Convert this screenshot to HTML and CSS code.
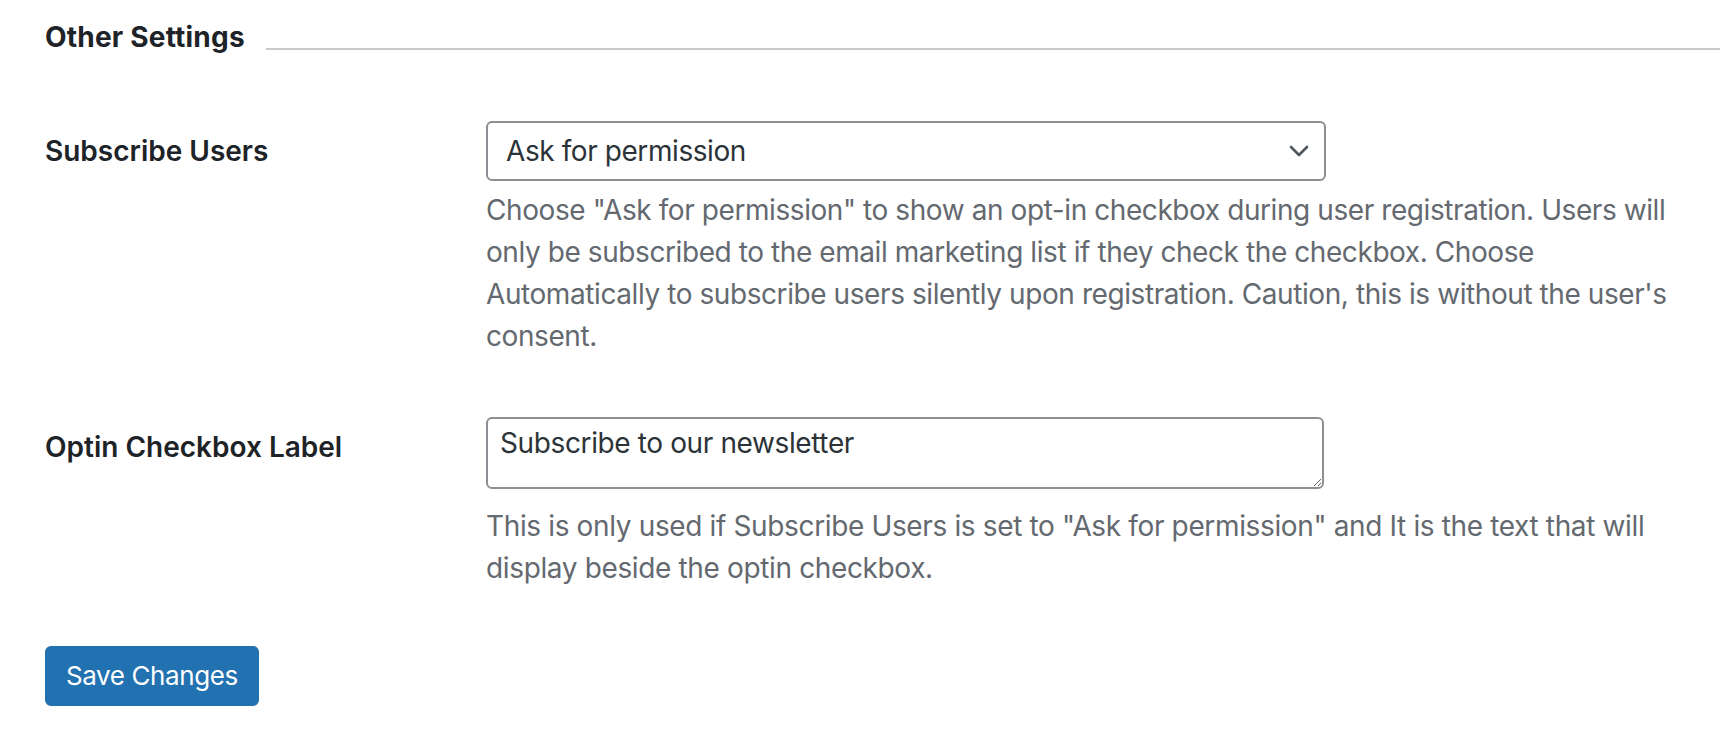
FILE: index.html
```html
<!DOCTYPE html>
<html lang="en">
<head>
<meta charset="utf-8">
<title>Other Settings</title>
<link rel="stylesheet" href="styles.css">
</head>
<body>
<div class="page">
  <div class="section-head">
    <h2 class="section-title">Other Settings</h2>
    <div class="section-rule"></div>
  </div>

  <form class="settings">
    <div class="row">
      <label class="row-label" for="subscribe-users">Subscribe Users</label>
      <div class="row-field">
        <div class="select-wrap">
          <select id="subscribe-users" class="select">
            <option>Ask for permission</option>
            <option>Automatically</option>
          </select>
          <svg class="chevron" width="20" height="12" viewBox="0 0 20 12" aria-hidden="true"><path d="M2 2 L10 10 L18 2" fill="none" stroke="#50575e" stroke-width="2.6" stroke-linecap="round" stroke-linejoin="round"/></svg>
        </div>
        <p class="description">Choose "Ask for permission" to show an opt-in checkbox during user registration. Users will only be subscribed to the email marketing list if they check the checkbox. Choose Automatically to subscribe users silently upon registration. Caution, this is without the user's consent.</p>
      </div>
    </div>

    <div class="row">
      <label class="row-label" for="optin-label">Optin Checkbox Label</label>
      <div class="row-field">
        <textarea id="optin-label" class="textarea">Subscribe to our newsletter</textarea>
        <p class="description description-after-textarea">This is only used if Subscribe Users is set to "Ask for permission" and It is the text that will display beside the optin checkbox.</p>
      </div>
    </div>

    <div class="submit">
      <button type="button" class="button-primary">Save Changes</button>
    </div>
  </form>
</div>
</body>
</html>
```

FILE: styles.css
```css
* {
  box-sizing: border-box;
}

html, body {
  margin: 0;
  padding: 0;
  background: #ffffff;
}

body {
  font-family: Inter, "Noto Sans", "Liberation Sans", sans-serif;
  color: #1d2327;
}

.page {
  padding: 19px 20px 0 45px;
}

.section-head {
  display: flex;
  align-items: flex-start;
  margin-right: -20px;
}

.section-title {
  margin: 0;
  font-size: 28px;
  line-height: 36px;
  font-weight: 700;
  letter-spacing: 0.2px;
  color: #1d2327;
  white-space: nowrap;
}

.section-rule {
  flex: 1;
  height: 2px;
  margin-top: 29px;
  margin-left: 21px;
  background: #c9cacc;
}

.settings {
  margin-top: 36px;
}

.row {
  display: grid;
  grid-template-columns: 420px 1fr;
}

.row-label {
  padding: 42px 20px 40px 0;
  font-size: 28px;
  line-height: 1.3;
  font-weight: 600;
  color: #1d2327;
}

.row-field {
  padding: 30px 0 30px 21px;
}

.select-wrap {
  position: relative;
  width: 840px;
}

.select {
  display: block;
  width: 840px;
  height: 60px;
  margin: 0;
  padding: 0 48px 0 18px;
  border: 2px solid #8c8f94;
  border-radius: 6px;
  background: #ffffff;
  font-family: inherit;
  font-size: 28px;
  letter-spacing: -0.42px;
  color: #2c3338;
  -webkit-appearance: none;
  appearance: none;
}

.chevron {
  position: absolute;
  right: 17px;
  top: 24px;
  pointer-events: none;
}

.description {
  margin: 8px 0 0;
  font-size: 28px;
  line-height: 42px;
  letter-spacing: -0.42px;
  color: #646970;
}

.description-after-textarea {
  margin-top: 16px;
  letter-spacing: -0.36px;
}

.textarea {
  display: block;
  width: 838px;
  height: 72px;
  margin: 0;
  padding: 4px 12px;
  border: 2px solid #8c8f94;
  border-radius: 6px;
  font-family: inherit;
  font-size: 28px;
  line-height: 40px;
  letter-spacing: -0.38px;
  color: #2c3338;
  resize: vertical;
}

.submit {
  padding-top: 27px;
}

.button-primary {
  height: 60px;
  padding: 0 19px;
  border: 2px solid #2271b1;
  border-radius: 6px;
  background: #2271b1;
  color: #ffffff;
  font-family: inherit;
  font-size: 26px;
  letter-spacing: -0.4px;
  line-height: 1;
  cursor: pointer;
}
```
